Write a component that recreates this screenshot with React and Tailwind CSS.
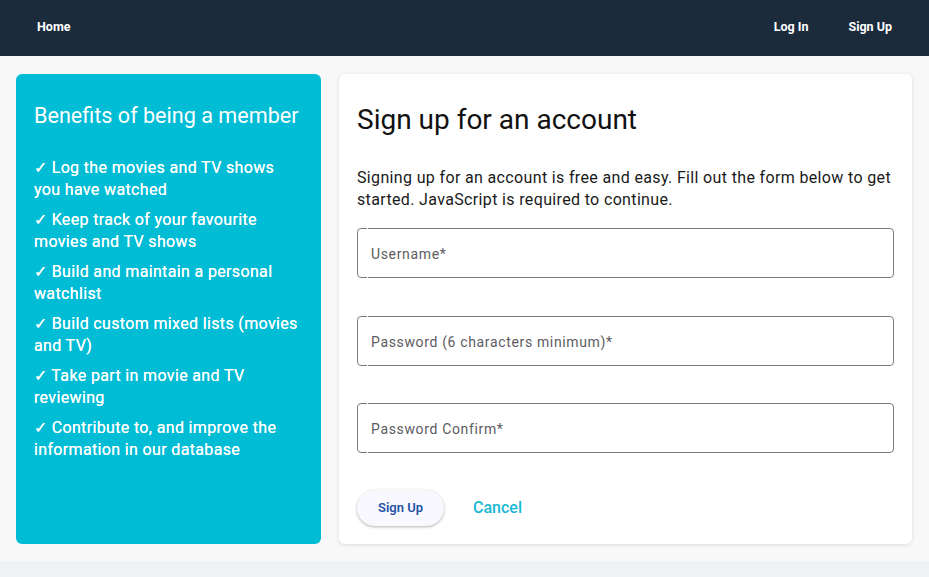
import React from 'react';

const benefits = [
  'Log the movies and TV shows you have watched',
  'Keep track of your favourite movies and TV shows',
  'Build and maintain a personal watchlist',
  'Build custom mixed lists (movies and TV)',
  'Take part in movie and TV reviewing',
  'Contribute to, and improve the information in our database',
];

function Champ({ label }) {
  return (
    <div className="relative h-[50px] w-full rounded-[4px] border border-[#7b7b80] flex items-center px-[13px] pt-[3px]">
      {/* petite encoche façon champ outlined */}
      <span className="absolute left-[9px] -top-px h-px w-px bg-white" />
      <span className="absolute left-[9px] -bottom-px h-px w-px bg-white" />
      <span className="text-[14px] tracking-[0.65px] text-[#5c5c62]">{label}</span>
    </div>
  );
}

export default function App() {
  return (
    <div className="min-h-[577px] bg-[#eff1f5] font-['Roboto',sans-serif]">
      {/* Barre de navigation */}
      <nav className="h-14 bg-[#1c2b3c] flex items-center justify-between pl-[37px] pr-[37px] pb-[2px] text-white text-[12.5px] font-bold">
        <span>Home</span>
        <div className="flex items-center gap-[40px]">
          <span>Log In</span>
          <span>Sign Up</span>
        </div>
      </nav>

      <main className="bg-[#f8f8f9] flex gap-[18px] pl-4 pr-[17px] pt-[18px] pb-[17px]">
        {/* Avantages */}
        <aside className="w-[305px] shrink-0 h-[470px] rounded-[6px] bg-[#00bcd4] text-white pl-[18px] pr-[20px] pt-[28px]">
          <h2 className="text-[21.6px] leading-[28px] whitespace-nowrap">Benefits of being a member</h2>
          <ul className="mt-[27px] space-y-2">
            {benefits.map((b) => (
              <li key={b} className="text-[16px] leading-[22px] tracking-[0.35px] [text-shadow:0_0_0.4px_white]">
                {'✓ ' + b}
              </li>
            ))}
          </ul>
        </aside>

        {/* Formulaire */}
        <section className="flex-1 h-[470px] rounded-[6px] bg-white shadow-[0_1px_4px_rgba(0,0,0,0.12)] px-[18px] pt-[28px]">
          <h1 className="text-[28px] leading-[36px] text-[#111]">Sign up for an account</h1>
          <p className="mt-[29px] text-[16px] leading-[22px] tracking-[0.35px] text-[#1a1a1a]">
            Signing up for an account is free and easy. Fill out the form below to get started. JavaScript is required to continue.
          </p>
          <div className="mt-[17px] flex flex-col gap-[37.5px]">
            <Champ label="Username*" />
            <Champ label="Password (6 characters minimum)*" />
            <Champ label="Password Confirm*" />
          </div>
          <div className="mt-[37px] flex items-center gap-[29px]">
            <button className="h-9 w-[87px] rounded-full bg-[#faf8ff] text-[13px] font-semibold text-[#2353a6] shadow-[0_1px_3px_rgba(0,0,0,0.3)]">
              Sign Up
            </button>
            <button className="text-[16px] font-medium text-[#17b8d3]">Cancel</button>
          </div>
        </section>
      </main>
    </div>
  );
}
